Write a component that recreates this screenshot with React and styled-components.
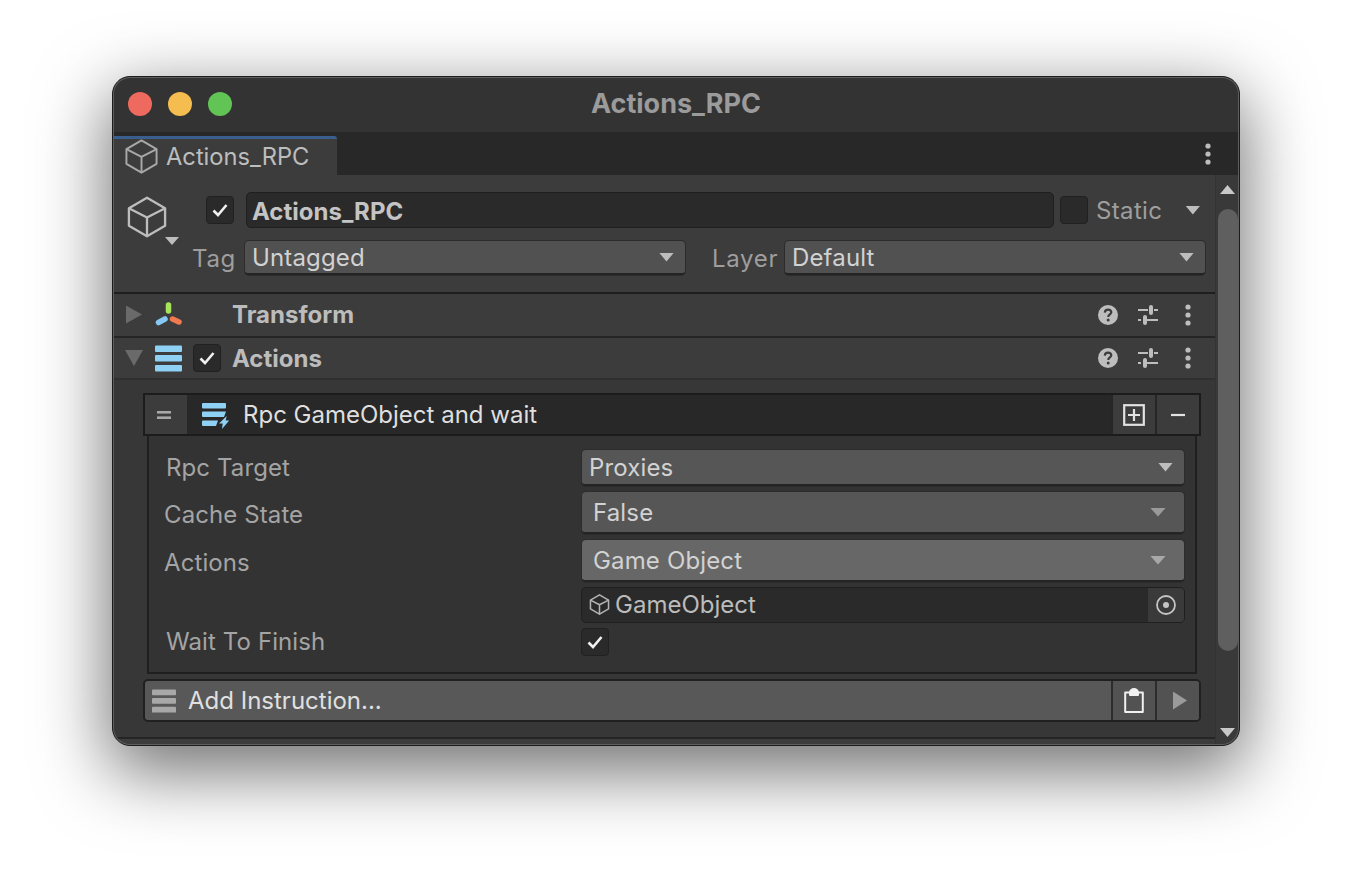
import styled, { createGlobalStyle } from "styled-components";

const GlobalStyle = createGlobalStyle`
  html, body { margin: 0; padding: 0; background: #fff; }
  * { box-sizing: border-box; }
`;

const Page = styled.div`
  width: 1352px;
  height: 894px;
  padding-top: 76px;
  display: flex;
  justify-content: center;
  align-items: flex-start;
  overflow: hidden;
  font-family: Inter, "Liberation Sans", sans-serif;
`;

const Window = styled.div`
  position: relative;
  width: 1128px;
  height: 670px;
  border-radius: 18px;
  border: 1px solid #1c1c1c;
  background: #3c3c3c;
  box-shadow: 0 22px 70px 4px rgba(0, 0, 0, 0.56);
  display: flex;
  flex-direction: column;
  overflow: hidden;
  padding-top: 1px;

  &::after {
    content: "";
    position: absolute;
    inset: 0;
    border-radius: 17px;
    box-shadow: inset 0 0 0 1px #5e5e5e;
    pointer-events: none;
  }
`;

const TitleBar = styled.div`
  height: 54px;
  flex: none;
  background: #333;
  display: flex;
  align-items: center;
  position: relative;
  padding: 0 0 2px 15px;
  gap: 16px;
`;

const Light = styled.span`
  width: 24px;
  height: 24px;
  border-radius: 50%;
  background: ${(p) => p.$color};
`;

const Title = styled.div`
  position: absolute;
  inset: 0;
  padding-bottom: 4px;
  display: flex;
  align-items: center;
  justify-content: center;
  font-size: 27px;
  font-weight: 700;
  color: #9b9b9b;
`;

const TabBar = styled.div`
  height: 43px;
  flex: none;
  background: #282828;
  display: flex;
  justify-content: space-between;
  align-items: stretch;
  padding-top: 4px;
`;

const Tab = styled.div`
  width: 224px;
  background: #3c3c3c;
  border-top: 3px solid #3a5f8f;
  border-top-right-radius: 3px;
  display: flex;
  align-items: center;
  gap: 7px;
  padding: 0 0 1px 11px;
  font-size: 23.7px;
  color: #bdbdbd;
`;

const TabMenu = styled.div`
  width: 62px;
  display: flex;
  align-items: center;
  justify-content: center;
  padding: 0 0 4px 0;
`;

const Main = styled.div`
  flex: 1;
  min-height: 0;
  display: flex;
`;

const Content = styled.div`
  width: 1102px;
  flex: none;
  display: flex;
  flex-direction: column;
`;

const Scrollbar = styled.div`
  flex: 1;
  background: #393939;
  border-left: 1px solid #333;
  display: flex;
  flex-direction: column;
  align-items: center;
  padding: 10px 0 8px;
`;

const Thumb = styled.div`
  width: 20px;
  height: 442px;
  margin: 15px 0 auto;
  border-radius: 10px;
  background: #5f5f5f;
`;

const Header = styled.div`
  height: 119px;
  flex: none;
  display: grid;
  grid-template-columns: 79px 1fr;
  border-bottom: 2px solid #1e1e1e;
`;

const CubeSlot = styled.div`
  position: relative;
  padding: 21px 0 0 13px;
`;

const Caret = styled.span`
  display: block;
  width: ${(p) => p.$w || 14}px;
  height: ${(p) => p.$h || 8}px;
  background: ${(p) => p.$color || "#bdbdbd"};
  clip-path: ${(p) =>
    p.$up ? "polygon(50% 0, 100% 100%, 0 100%)" : "polygon(0 0, 100% 0, 50% 100%)"};
  flex: none;
`;

const CubeCaret = styled(Caret)`
  position: absolute;
  left: 52px;
  top: 62px;
`;

const HeaderRows = styled.div`
  display: flex;
  flex-direction: column;
  padding: 17px 10px 0 0;
`;

const NameRow = styled.div`
  display: flex;
  align-items: center;
  height: 36px;
`;

const Check = styled.span`
  width: 28px;
  height: 28px;
  flex: none;
  border-radius: 4px;
  background: #2a2a2a;
  border: 1px solid #212121;
  margin-left: ${(p) => p.$left || 0}px;
  display: flex;
  align-items: center;
  justify-content: center;
`;

const NameInput = styled.div`
  width: 808px;
  height: 36px;
  margin: 0 6px 0 12px;
  border-radius: 5px;
  background: #2a2a2a;
  border: 1px solid #1f1f1f;
  display: flex;
  align-items: center;
  padding: 2px 0 0 5px;
  font-size: 24px;
  font-weight: 700;
  color: #c4c4c4;
`;

const StaticLabel = styled.span`
  margin: 0 23px 0 8px;
  font-size: 24px;
  color: #9e9e9e;
  letter-spacing: 0.35px;
`;

const TagRow = styled.div`
  display: flex;
  align-items: center;
  margin-top: 13px;
`;

const TagLabel = styled.span`
  font-size: 24px;
  color: #9e9e9e;
  letter-spacing: 0.7px;
  margin-left: ${(p) => p.$left}px;
  width: ${(p) => p.$w}px;
  flex: none;
`;

const Dropdown = styled.div`
  height: ${(p) => p.$h || 34}px;
  width: ${(p) => p.$w}px;
  flex: none;
  border-radius: 4px;
  background: ${(p) => p.$bg || "#515151"};
  border-bottom: 2px solid #242424;
  box-shadow: 0 0 0 1px #2c2c2c;
  display: flex;
  align-items: center;
  justify-content: space-between;
  padding: 0 ${(p) => p.$padR || 11}px 0 ${(p) => p.$padL || 7}px;
  font-size: 24px;
  color: #d2d2d2;
  letter-spacing: 0.15px;
`;

const ComponentRow = styled.div`
  height: ${(p) => p.$h}px;
  flex: none;
  padding-bottom: ${(p) => p.$bottom || 0}px;
  border-bottom: 2px solid ${(p) => p.$line || "#252525"};
  display: grid;
  grid-template-columns: 42px 38px 39px 1fr auto;
  align-items: center;
`;

const Fold = styled.div`
  display: flex;
  justify-content: center;
`;

const FoldRight = styled.span`
  width: 16px;
  height: 18px;
  background: #6a6a6a;
  clip-path: polygon(0 0, 100% 50%, 0 100%);
`;

const ComponentTitle = styled.span`
  font-size: 24px;
  font-weight: 700;
  color: #bcbcbc;
`;

const RowTools = styled.div`
  display: grid;
  grid-template-columns: repeat(3, 40px);
  justify-items: center;
  align-items: center;
  padding-right: 7px;
`;

const Body = styled.div`
  flex: 1;
  min-height: 0;
  background: #373737;
  padding: 13px 14px 0 30px;
`;

const ItemRow = styled.div`
  height: 43px;
  background: #282828;
  border: 2px solid #1c1c1c;
  display: flex;
  align-items: stretch;
`;

const Grip = styled.div`
  width: 42px;
  padding-right: 4px;
  background: #3c3c3c;
  display: flex;
  align-items: center;
  justify-content: center;
`;

const ItemTitle = styled.div`
  flex: 1;
  display: flex;
  align-items: center;
  gap: 13px;
  padding-left: 15px;
  font-size: 24px;
  color: #dfdfdf;
`;

const EndButton = styled.div`
  width: 44px;
  flex: none;
  padding-left: ${(p) => p.$inset || 0}px;
  background: ${(p) => p.$bg || "#3c3c3c"};
  border-left: 2px solid ${(p) => p.$line || "#262626"};
  display: flex;
  align-items: center;
  justify-content: center;
`;

const Panel = styled.div`
  margin: 0 4px;
  height: 238px;
  background: #333;
  border: 2px solid #1f1f1f;
  border-top: 0;
  padding: 14px 11px 0 15px;
  display: grid;
  grid-template-columns: 418px 1fr;
  grid-template-rows: 37px 43px 42px 36px 28px;
  row-gap: 5px;
  align-items: start;
`;

const FieldLabel = styled.span`
  font-size: 24px;
  line-height: 36px;
  color: #a4a4a4;
  letter-spacing: 0.1px;
  padding-left: ${(p) => p.$pad || 0}px;
  margin-top: ${(p) => p.$shift || 0}px;
`;

const ObjectField = styled.div`
  height: 36px;
  margin: 0 -1px;
  border-radius: 5px;
  background: #2a2a2a;
  border: 1px solid #1f1f1f;
  display: flex;
  align-items: stretch;
`;

const ObjectValue = styled.div`
  flex: 1;
  display: flex;
  align-items: center;
  gap: 5px;
  padding: 0 0 2px 7px;
  font-size: 24px;
  color: #bcbcbc;
`;

const ObjectPicker = styled.div`
  width: 36px;
  background: #3a3a3a;
  border-radius: 0 4px 4px 0;
  display: flex;
  align-items: center;
  justify-content: center;
`;

const AddBar = styled.div`
  height: 43px;
  margin-top: 5px;
  border-radius: 5px;
  background: #585858;
  border: 2px solid #202020;
  display: flex;
  align-items: stretch;
  overflow: hidden;
`;

const AddLabel = styled.div`
  flex: 1;
  display: flex;
  align-items: center;
  gap: 12px;
  padding-left: 7px;
  font-size: 24px;
  color: #e0e0e0;
`;

const BodyFooter = styled.div`
  height: 8px;
  flex: none;
  background: #3c3c3c;
  border-top: 2px solid #252525;
`;

const PlayTriangle = styled.span`
  width: 14px;
  height: 18px;
  background: #9a9a9a;
  clip-path: polygon(0 0, 100% 50%, 0 100%);
`;

const Cube = ({ size, color = "#bdbdbd", w = 2 }) => (
  <svg width={size} height={size} viewBox="0 0 36 36" fill="none" stroke={color} strokeWidth={w} strokeLinejoin="round">
    <path d="M18 1.5 33.5 10.5V25.5L18 34.5 2.5 25.5V10.5Z" />
    <path d="M2.5 10.5 18 18.5 33.5 10.5M18 18.5V34.5" />
  </svg>
);

const Tick = ({ size = 18 }) => (
  <svg width={size} height={size} viewBox="0 0 18 18" fill="none" stroke="#f0f0f0" strokeWidth="2.6">
    <path d="M2.5 9.5 7 14 15.5 4" />
  </svg>
);

const Dots = ({ color = "#bdbdbd" }) => (
  <svg width="8" height="22" viewBox="0 0 8 22" fill={color}>
    <circle cx="4" cy="3" r="2.6" />
    <circle cx="4" cy="11" r="2.6" />
    <circle cx="4" cy="19" r="2.6" />
  </svg>
);

const Help = () => (
  <svg width="20" height="20" viewBox="0 0 20 20">
    <circle cx="10" cy="10" r="10" fill="#bdbdbd" />
    <path d="M6.8 7.6C6.9 5.7 8.2 4.6 10.1 4.6 12 4.6 13.3 5.7 13.3 7.3 13.3 9.5 10.3 9.5 10.3 11.9" fill="none" stroke="#3c3c3c" strokeWidth="2.2" />
    <circle cx="10.2" cy="15" r="1.5" fill="#3c3c3c" />
  </svg>
);

const Sliders = () => (
  <svg width="20" height="20" viewBox="0 0 20 20" fill="#bdbdbd">
    <rect x="0" y="4" width="10" height="2" />
    <rect x="16" y="4" width="4" height="2" />
    <rect x="11" y="0" width="4" height="10" rx="2" />
    <rect x="0" y="14" width="3" height="2" />
    <rect x="9" y="14" width="11" height="2" />
    <rect x="5" y="10" width="4" height="10" rx="2" />
  </svg>
);

const TransformIcon = () => (
  <svg width="28" height="26" viewBox="0 0 28 26" fill="none" strokeWidth="5.5" strokeLinecap="round">
    <path d="M13.5 3V9" stroke="#a8e45a" />
    <path d="M3.5 20.5 10 17" stroke="#86c8f2" />
    <path d="M17.5 17 24 20" stroke="#ef7a50" />
  </svg>
);

const StackIcon = ({ color = "#8fd0f5", w = 27, h = 27 }) => (
  <svg width={w} height={h} viewBox="0 0 27 27" fill={color}>
    <rect x="0" y="0.5" width="27" height="6.5" rx="1" />
    <rect x="0" y="10" width="27" height="6.5" rx="1" />
    <rect x="0" y="20" width="27" height="6.5" rx="1" />
  </svg>
);

const RpcIcon = () => (
  <svg width="28" height="28" viewBox="0 0 28 28" fill="#8fd0f5">
    <rect x="0" y="2" width="24" height="5.5" rx="1" />
    <path d="M1 10.5H24L22 16H1a1 1 0 0 1-1-1V11.5a1 1 0 0 1 1-1Z" />
    <path d="M1 19.5H16L14 25H1a1 1 0 0 1-1-1V20.5a1 1 0 0 1 1-1Z" />
    <path d="M24.7 15 17 22.5H20.7L20 28 27.2 19.5H23.7Z" stroke="#282828" strokeWidth="1.6" paintOrder="stroke" />
  </svg>
);

const Plus = () => (
  <svg width="22" height="22" viewBox="0 0 22 22" fill="none" stroke="#e2e2e2" strokeWidth="2.2">
    <rect x="1.2" y="1.2" width="19.6" height="19.6" />
    <path d="M11 5V17M5 11H17" />
  </svg>
);

const Minus = () => (
  <svg width="14" height="14" viewBox="0 0 14 14" stroke="#e2e2e2" strokeWidth="2.2">
    <path d="M0 7H14" />
  </svg>
);

const Equals = () => (
  <svg width="14" height="8" viewBox="0 0 14 8" fill="#a8a8a8">
    <rect width="14" height="2.6" />
    <rect y="5.4" width="14" height="2.6" />
  </svg>
);

const Target = () => (
  <svg width="20" height="20" viewBox="0 0 20 20" fill="none">
    <circle cx="10" cy="10" r="9" stroke="#c4c4c4" strokeWidth="1.8" />
    <circle cx="10" cy="10" r="3" fill="#c4c4c4" />
  </svg>
);

const Clipboard = () => (
  <svg width="20" height="25" viewBox="0 0 20 25" fill="none" stroke="#f0f0f0" strokeWidth="2" strokeLinejoin="round">
    <path d="M6 4.5H1.2V24H18.8V4.5H14" />
    <path d="M6 7V4.5C6 2.5 8 1 10 1S14 2.5 14 4.5V7Z" fill="#f0f0f0" />
  </svg>
);

const Tools = () => (
  <RowTools>
    <Help />
    <Sliders />
    <Dots />
  </RowTools>
);

export default function App() {
  return (
    <Page>
      <GlobalStyle />
      <Window>
        <TitleBar>
          <Light $color="#ee6a5f" />
          <Light $color="#f5bd4f" />
          <Light $color="#61c454" />
          <Title>Actions_RPC</Title>
        </TitleBar>
        <TabBar>
          <Tab>
            <Cube size={35} color="#a8a8a8" />
            Actions_RPC
          </Tab>
          <TabMenu>
            <Dots />
          </TabMenu>
        </TabBar>
        <Main>
          <Content>
            <Header>
              <CubeSlot>
                <Cube size={42} />
                <CubeCaret />
              </CubeSlot>
              <HeaderRows>
                <NameRow>
                  <Check $left={14}>
                    <Tick />
                  </Check>
                  <NameInput>Actions_RPC</NameInput>
                  <Check />
                  <StaticLabel>Static</StaticLabel>
                  <Caret $w={15} $h={9} />
                </NameRow>
                <TagRow>
                  <TagLabel $left={0} $w={53}>Tag</TagLabel>
                  <Dropdown $w={440}>
                    Untagged
                    <Caret $w={15} $h={9} />
                  </Dropdown>
                  <TagLabel $left={27} $w={73}>Layer</TagLabel>
                  <Dropdown $w={420}>
                    Default
                    <Caret $w={15} $h={9} />
                  </Dropdown>
                </TagRow>
              </HeaderRows>
            </Header>
            <ComponentRow $h={44} $bottom={1}>
              <Fold>
                <FoldRight />
              </Fold>
              <TransformIcon />
              <span />
              <ComponentTitle>Transform</ComponentTitle>
              <Tools />
            </ComponentRow>
            <ComponentRow $h={42} $line="#303030">
              <Fold>
                <Caret $w={18} $h={16} $color="#6a6a6a" />
              </Fold>
              <StackIcon />
              <Check>
                <Tick />
              </Check>
              <ComponentTitle>Actions</ComponentTitle>
              <Tools />
            </ComponentRow>
            <Body>
              <ItemRow>
                <Grip>
                  <Equals />
                </Grip>
                <ItemTitle>
                  <RpcIcon />
                  Rpc GameObject and wait
                </ItemTitle>
                <EndButton>
                  <Plus />
                </EndButton>
                <EndButton>
                  <Minus />
                </EndButton>
              </ItemRow>
              <Panel>
                <FieldLabel $pad={2}>Rpc Target</FieldLabel>
                <Dropdown $w={602} $h={36} $padL={7} $padR={11} $bg="#565656">
                  Proxies
                  <Caret $w={15} $h={9} />
                </Dropdown>
                <FieldLabel $shift={5}>Cache State</FieldLabel>
                <Dropdown $w={602} $h={42} $padL={11} $padR={18} $bg="#565656">
                  False
                  <Caret $w={16} $h={9} $color="#9a9a9a" />
                </Dropdown>
                <FieldLabel $shift={5}>Actions</FieldLabel>
                <Dropdown $w={602} $h={42} $padL={11} $padR={18} $bg="#676767">
                  Game Object
                  <Caret $w={16} $h={9} $color="#a8a8a8" />
                </Dropdown>
                <span />
                <ObjectField>
                  <ObjectValue>
                    <Cube size={21} w={2.6} color="#b4b4b4" />
                    GameObject
                  </ObjectValue>
                  <ObjectPicker>
                    <Target />
                  </ObjectPicker>
                </ObjectField>
                <FieldLabel $pad={2} $shift={-4}>Wait To Finish</FieldLabel>
                <Check $left={-1}>
                  <Tick />
                </Check>
              </Panel>
              <AddBar>
                <AddLabel>
                  <StackIcon color="#a8a8a8" w={24} h={24} />
                  Add Instruction...
                </AddLabel>
                <EndButton $bg="#525252" $line="#2c2c2c">
                  <Clipboard />
                </EndButton>
                <EndButton $bg="#525252" $line="#2c2c2c" $inset={4}>
                  <PlayTriangle />
                </EndButton>
              </AddBar>
            </Body>
            <BodyFooter />
          </Content>
          <Scrollbar>
            <Caret $up $w={15} $h={9} $color="#c8c8c8" />
            <Thumb />
            <Caret $w={15} $h={9} $color="#c8c8c8" />
          </Scrollbar>
        </Main>
      </Window>
    </Page>
  );
}
